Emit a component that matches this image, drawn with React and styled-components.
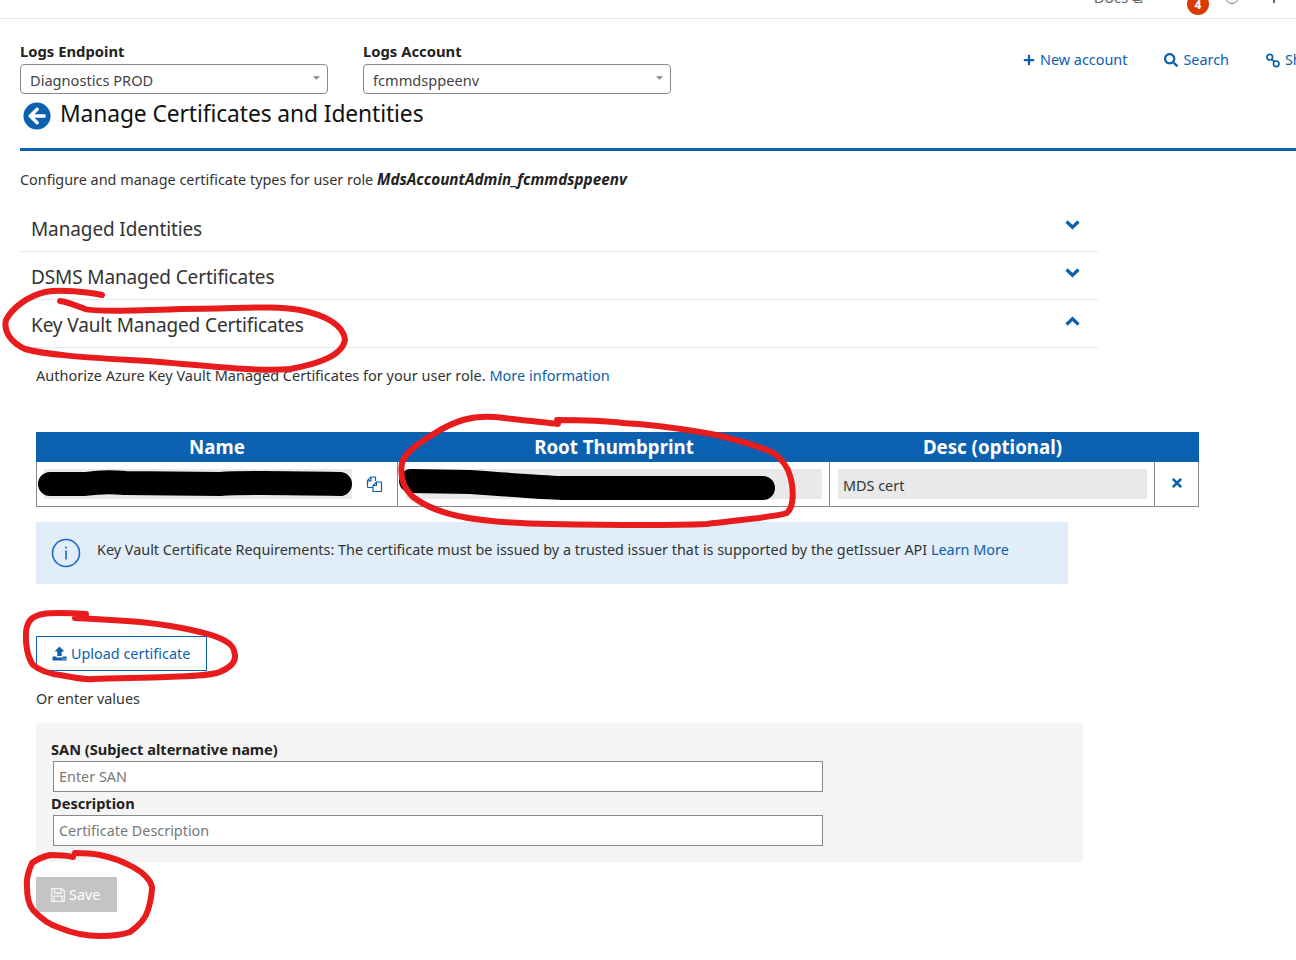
import React from "react";
import styled, { createGlobalStyle } from "styled-components";
import { FaPlus, FaSearch, FaTimes, FaArrowCircleLeft, FaCaretDown } from "react-icons/fa";

const BLUE = "#0b60b0";
const Global = createGlobalStyle`
  html, body { margin: 0; padding: 0; background: #fff; }
  body { font-family: "Noto Sans", "Open Sans", sans-serif; color: #2b2b2b; }
`;
const Page = styled.div`
  position: relative; width: 1296px; height: 960px; overflow: hidden; background: #fff;
  font-size: 14.4px;
`;
const TopBar = styled.header`
  height: 18px; border-bottom: 1px solid #e4e4e4; display: flex; justify-content: flex-end;
  align-items: flex-end; overflow: hidden; padding-right: 21px;
`;
const Docs = styled.span`font-size: 15px; color: #666; margin: 0 44px 11px 0; line-height: 20px;`;
const Badge = styled.span`
  width: 22px; height: 22px; border-radius: 50%; background: #d83b01; color: #fff; font-size: 12px; font-weight: 700;
  display: flex; align-items: center; justify-content: center; margin-right: 16px; transform: translateY(-3px); flex: none;
`;
const TopDot = styled.span`width: 14px; height: 14px; border: 1.5px solid #777; border-radius: 50%; margin: 0 34px 14px 0; flex: none; box-sizing: border-box;`;
const TopTick = styled.span`width: 2px; height: 4px; background: #666; margin-bottom: 15px; flex: none;`;

const HeaderRow = styled.div`display: flex; padding: 24px 0 0 20px; height: 52px;`;
const Field = styled.div`width: 308px; margin-right: 35px; flex: none;`;
const FieldLabel = styled.div`font-size: 14.8px; font-weight: 700; line-height: 16px; margin-bottom: 5px; color: #222;`;
const Select = styled.div`
  box-sizing: border-box; height: 30px; border: 1px solid #8a8a8a; border-radius: 4px; display: flex; align-items: center;
  justify-content: space-between; padding: 2px 5px 0 9px; font-size: 14.6px; color: #444;
  svg { color: #888; font-size: 11px; margin-top: -5px; }
`;
const Actions = styled.nav`display: flex; margin-left: auto; padding-top: 7px; gap: 37px; flex: none; width: 273px; white-space: nowrap;`;
const Action = styled.a`
  display: flex; align-items: center; gap: 5px; color: ${BLUE}; font-size: 14.4px; line-height: 20px; height: 20px;
  svg { flex: none; }
`;
const TitleRow = styled.div`display: flex; align-items: center; padding-left: 23px; height: 38px;`;
const BackIcon = styled(FaArrowCircleLeft)`font-size: 28px; color: ${BLUE}; margin-top: 3px; flex: none;`;
const Title = styled.h1`font-size: 22.8px; font-weight: 400; color: #111; margin: 0 0 0 9px; letter-spacing: -0.1px; line-height: 36px;`;
const Rule = styled.div`height: 3px; background: ${BLUE}; margin: 15px 0 0 20px;`;
const Intro = styled.p`margin: 18px 0 0 20px; line-height: 20px; color: #333;`;
const RoleName = styled.b`font-style: italic; color: #222; font-size: 15.3px;`;
const Accordion = styled.section`width: 1078px; margin: 14px 0 0 20px;`;
const AccRow = styled.div`
  box-sizing: border-box; height: 48px; border-bottom: 1px solid #e8e8e8; display: flex; justify-content: space-between;
  padding: 11px 18px 0 11px; font-size: 19px; line-height: 28px; color: #333; letter-spacing: -0.12px;
`;
const Chevron = styled.svg`flex: none; margin-top: 5px;`;
const Body = styled.div`padding-left: 36px;`;
const Para = styled.p`margin: 17px 0 0; line-height: 20px; color: #333; font-size: 14.5px;`;
const Link = styled.a`color: ${BLUE};`;
const Table = styled.table`
  width: 1163px; margin-top: 47px; border-collapse: separate; border-spacing: 0; table-layout: fixed;
`;
const Th = styled.th`
  background: ${BLUE}; color: #fff; height: 30px; padding: 0; font-size: 18.7px; font-weight: 700; line-height: 24px;
`;
const Td = styled.td`
  border-right: 1px solid #888; border-bottom: 1px solid #888; height: 45px; padding: 0 7px 0 8px; box-sizing: border-box;
  &:first-child { border-left: 1px solid #888; padding-left: 7px; padding-right: 0; }
`;
const CellFlex = styled.div`display: flex; align-items: center;`;
const GrayInput = styled.div`
  box-sizing: border-box; flex: 1; height: 30px; background: #e9e9e9; color: #333; padding: 0 5px; line-height: 33px;
`;
const CopyWrap = styled.span`width: 45px; display: flex; justify-content: center; flex: none;`;
const RemoveCell = styled(Td)`text-align: center; color: ${BLUE}; font-size: 14px; padding: 0;`;
const Info = styled.div`
  width: 1032px; height: 62px; box-sizing: border-box; margin-top: 15px; background: #e1eef9; display: flex; align-items: flex-start;
  padding: 16px 0 0 15px; line-height: 24px;
`;
const InfoText = styled.span`margin-left: 16px; color: #333;`;
const UploadBtn = styled.button`
  display: flex; align-items: center; gap: 4px; box-sizing: border-box; width: 171px; height: 35px; margin-top: 52px; background: #fff;
  border: 1px solid ${BLUE}; color: ${BLUE}; font: inherit; padding: 0 0 0 15px;
`;
const OrText = styled.p`margin: 18px 0 0; line-height: 20px; color: #333;`;
const Panel = styled.div`
  box-sizing: border-box; width: 1047px; height: 139px; margin-top: 14px; background: #f5f5f5; padding: 16px 0 0 15px;
`;
const PanelLabel = styled.label`display: block; font-weight: 700; font-size: 14.6px; line-height: 20px; color: #222;`;
const TextBox = styled.div`
  box-sizing: border-box; width: 770px; height: 31px; margin: 2px 0 0 2px; background: #fff; border: 1px solid #888; color: #777; padding: 0 5px; line-height: 30px;
  & + label { margin-top: 1px; }
`;
const SaveBtn = styled.button`
  display: flex; align-items: center; gap: 4px; box-sizing: border-box; width: 81px; height: 35px; margin-top: 15px; padding: 0 0 0 15px;
  background: #c4c4c4; border: 0; color: #fff; font: inherit;
`;
const Marks = styled.svg`position: absolute; left: 0; top: 0; pointer-events: none;`;

const Chev = ({ up }) => (
  <Chevron width="15" height="10" viewBox="0 0 15 10" fill="none" stroke={BLUE} strokeWidth="3.2">
    <path d={up ? "M1.5 8.5 7.5 2.8 13.5 8.5" : "M1.5 1.5 7.5 7.2 13.5 1.5"} />
  </Chevron>
);
const LinkIcon = () => (
  <svg width="14" height="15" viewBox="0 0 14 15" fill="none" stroke={BLUE} strokeWidth="1.7">
    <circle cx="3.8" cy="4.2" r="2.8" />
    <circle cx="10.2" cy="10.8" r="2.8" />
    <path d="M5 6 9 9.2" />
  </svg>
);
const Copy = () => (
  <svg width="17" height="17" viewBox="0 0 17 17" fill="none" stroke={BLUE} strokeWidth="1.2">
    <path d="M1.5 11.5V4.5l3.5-3.5h4.5v4M1.5 11.5h5.5" />
    <path d="M1.5 4.8h3.5V1" />
    <path d="M7 9.5 10.5 6H15.5v9.5H7z" />
    <path d="M7 9.5h3.5V6" />
  </svg>
);
const UploadIcon = () => (
  <svg width="15" height="15" viewBox="0 0 15 15" fill={BLUE}>
    <path d="M7.5 0.5 12.5 5.5H9.7V10H5.3V5.5H2.5z" />
    <path d="M0.5 10.5H4.5v1h6v-1h4V14.5H0.5z" />
    <rect x="10.5" y="12.3" width="1" height="1" fill="#fff" />
    <rect x="12.3" y="12.3" width="1" height="1" fill="#fff" />
  </svg>
);
const SaveIcon = () => (
  <svg width="14" height="14" viewBox="0 0 14 14" fill="none" stroke="#f4f4f4" strokeWidth="1.3">
    <path d="M0.7 0.7H11L13.3 3V13.3H0.7z" />
    <path d="M3.5 1V5H10V1" />
    <path d="M3 13V8.2H11V13" />
  </svg>
);
const InfoIcon = () => (
  <svg width="30" height="30" viewBox="0 0 30 30" fill="none">
    <circle cx="15" cy="15" r="13.5" stroke="#1a66c9" strokeWidth="1.6" />
    <rect x="14.2" y="12.5" width="1.6" height="9" fill="#1a66c9" />
    <rect x="14.2" y="8.5" width="1.6" height="2" fill="#1a66c9" />
  </svg>
);

const redact = [
  "M50 484 L85 484 Q105 481 125 483 L220 484 Q245 482 340 484",
  "M411 481 L470 482 Q540 487 562 488 L763 488",
];
const rings = [
  "M102 295 C88 292 60 289 45 292 C28 296 12 308 6 320 C3 332 12 343 25 349 C50 356 100 358 160 362 C210 366 260 372 290 369 C318 364 342 356 345 340 C344 325 325 315 300 310 C270 305 240 309 180 309 C130 311 95 312 85 309 C75 305 68 302 60 301",
  "M558 424 C540 422 520 420 495 417 C470 415 455 422 440 430 C420 442 405 452 402 463 C400 475 402 487 413 497 C430 510 455 517 483 520 C510 523 530 524 550 524 C600 525 660 526 707 524 C740 520 775 517 787 513 C795 505 794 485 788 470 C782 458 775 453 767 450 C745 442 720 435 700 432 C670 427 640 424 623 423 C600 420 580 420 557 420",
  "M86 614 C70 613 55 612 43 614 C33 616 27 620 26 632 C25 645 28 658 33 665 C42 672 50 674 60 675 C75 678 85 680 93 679 C120 678 145 678 167 677 C190 676 205 676 217 673 C228 669 236 664 235 655 C234 648 232 645 227 642 C218 636 208 634 200 632 C180 627 160 624 140 622 C115 620 95 619 75 618",
  "M73 857 C65 855 57 855 50 855 C42 857 36 860 32 863 C28 872 26 880 27 887 C27 897 29 905 33 910 C42 920 50 925 60 928 C72 933 86 936 100 936 C112 936 122 935 130 932 C140 925 146 917 148 910 C151 900 152 893 152 887 C150 878 142 872 133 867 C122 861 110 857 100 855 C90 853 82 853 75 853",
];

export default function App() {
  return (
    <Page>
      <Global />
      <TopBar>
        <Docs>Docs ⧉</Docs>
        <Badge>4</Badge>
        <TopDot />
        <TopTick />
      </TopBar>
      <HeaderRow>
        <Field>
          <FieldLabel>Logs Endpoint</FieldLabel>
          <Select>Diagnostics PROD<FaCaretDown /></Select>
        </Field>
        <Field>
          <FieldLabel>Logs Account</FieldLabel>
          <Select>fcmmdsppeenv<FaCaretDown /></Select>
        </Field>
        <Actions>
          <Action><FaPlus size={12} />New account</Action>
          <Action><FaSearch size={14} />Search</Action>
          <Action><LinkIcon />Share</Action>
        </Actions>
      </HeaderRow>
      <TitleRow>
        <BackIcon />
        <Title>Manage Certificates and Identities</Title>
      </TitleRow>
      <Rule />
      <Intro>Configure and manage certificate types for user role <RoleName>MdsAccountAdmin_fcmmdsppeenv</RoleName></Intro>
      <Accordion>
        <AccRow>Managed Identities<Chev /></AccRow>
        <AccRow>DSMS Managed Certificates<Chev /></AccRow>
        <AccRow>Key Vault Managed Certificates<Chev up /></AccRow>
      </Accordion>
      <Body>
        <Para>Authorize Azure Key Vault Managed Certificates for your user role. <Link>More information</Link></Para>
        <Table>
          <colgroup>
            <col style={{ width: 362 }} />
            <col style={{ width: 432 }} />
            <col style={{ width: 325 }} />
            <col style={{ width: 44 }} />
          </colgroup>
          <thead>
            <tr><Th>Name</Th><Th>Root Thumbprint</Th><Th>Desc (optional)</Th><Th /></tr>
          </thead>
          <tbody>
            <tr>
              <Td><CellFlex><GrayInput /><CopyWrap><Copy /></CopyWrap></CellFlex></Td>
              <Td><CellFlex><GrayInput /></CellFlex></Td>
              <Td><CellFlex><GrayInput>MDS cert</GrayInput></CellFlex></Td>
              <RemoveCell><FaTimes /></RemoveCell>
            </tr>
          </tbody>
        </Table>
        <Info>
          <InfoIcon />
          <InfoText>Key Vault Certificate Requirements: The certificate must be issued by a trusted issuer that is supported by the getIssuer API <Link>Learn More</Link></InfoText>
        </Info>
        <UploadBtn><UploadIcon />Upload certificate</UploadBtn>
        <OrText>Or enter values</OrText>
        <Panel>
          <PanelLabel>SAN (Subject alternative name)</PanelLabel>
          <TextBox>Enter SAN</TextBox>
          <PanelLabel>Description</PanelLabel>
          <TextBox>Certificate Description</TextBox>
        </Panel>
        <SaveBtn><SaveIcon />Save</SaveBtn>
      </Body>
      <Marks width="1296" height="960" viewBox="0 0 1296 960" fill="none" strokeLinecap="round" strokeLinejoin="round">
        {redact.map((d) => <path key={d} d={d} stroke="#000" strokeWidth="24" />)}
        {rings.map((d) => <path key={d} d={d} stroke="#e81c1c" strokeWidth="6" />)}
      </Marks>
    </Page>
  );
}
